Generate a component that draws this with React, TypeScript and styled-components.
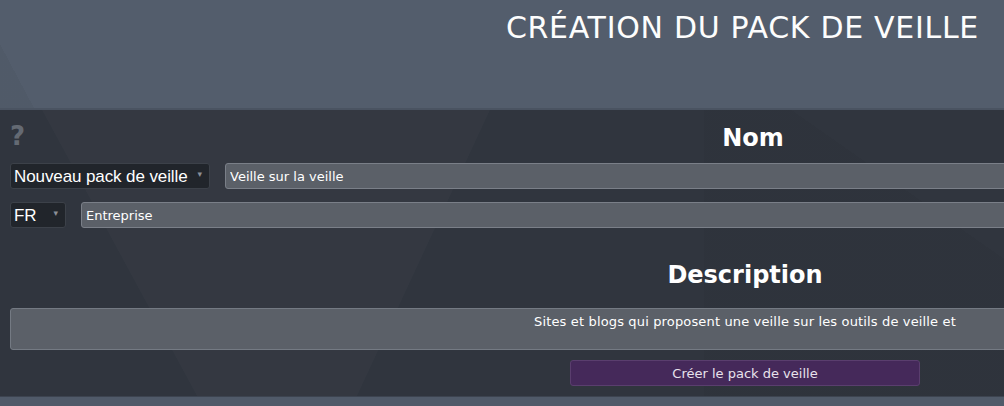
import styled, { createGlobalStyle } from "styled-components";

const GlobalStyle = createGlobalStyle`
  html, body {
    margin: 0;
    padding: 0;
    background: #31363f;
    overflow: hidden;
  }

  * {
    box-sizing: border-box;
  }
`;

const Page = styled.div`
  width: 1004px;
  height: 406px;
  overflow: hidden;
  display: flex;
  flex-direction: column;
  font-family: "DejaVu Sans", Verdana, sans-serif;
  color: #fff;
`;

const Header = styled.header`
  height: 110px;
  flex-shrink: 0;
  padding: 10px 25px 0 0;
  text-align: right;
  background:
    linear-gradient(62deg, rgba(0, 0, 0, 0.035) 0 3.2%, transparent 3.2%),
    #535d6c;
  border-bottom: 2px solid #4a5361;
`;

const Title = styled.h1`
  margin: 0;
  font-size: 30px;
  line-height: 36px;
  font-weight: 400;
  letter-spacing: 0.7px;
  color: #fdfdfd;
`;

// low-poly lighter band behind the form
const Main = styled.main`
  position: relative;
  flex-shrink: 0;
  height: 287px;
  padding: 14px 0 10px 10px;
  background:
    linear-gradient(215deg, rgba(0, 0, 0, 0) 0 30%, rgba(0, 0, 0, 0.03) 30% 100%) right / 300px 100% no-repeat,
    #30353e;
  border-bottom: 1px solid #3d4450;

  &::before {
    content: "";
    position: absolute;
    inset: 0;
    background: rgba(255, 255, 255, 0.018);
    clip-path: polygon(42px 0, 490px 0, 357px 100%, 197px 100%);
    pointer-events: none;
  }
`;

const Form = styled.form`
  position: relative;
  width: 1470px;
  display: flex;
  flex-direction: column;
`;

const TopRow = styled.div`
  display: flex;
  align-items: flex-start;
`;

const Help = styled.span`
  width: 16px;
  margin-top: -3px;
  font-size: 26px;
  line-height: 30px;
  font-weight: 700;
  color: #646a73;
  cursor: help;
`;

const SectionTitle = styled.h2<{ $top?: number }>`
  flex: 1;
  margin: ${(p) => p.$top ?? 0}px 0 0;
  font-size: 24px;
  line-height: 29px;
  font-weight: 700;
  text-align: center;
  color: #fff;
`;

const FieldRow = styled.div<{ $top: number }>`
  display: flex;
  gap: 15px;
  margin-top: ${(p) => p.$top}px;
`;

const SelectWrap = styled.div<{ $width: number }>`
  position: relative;
  width: ${(p) => p.$width}px;
  height: 26px;
  flex-shrink: 0;

  &::after {
    content: "▾";
    position: absolute;
    right: 8px;
    top: 6px;
    font-size: 9px;
    color: #8c9098;
    pointer-events: none;
  }
`;

const Select = styled.select`
  appearance: none;
  width: 100%;
  height: 100%;
  padding: 0 0 0 3px;
  background: #21252b;
  border: 1px solid #3c4149;
  border-radius: 3px;
  color: #fff;
  font-family: "Liberation Sans", Arial, sans-serif;
  font-size: 17px;
  letter-spacing: -0.1px;
  outline: none;
`;

const TextInput = styled.input`
  flex: 1;
  height: 26px;
  padding: 0 4px;
  background: #5b6068;
  border: 1px solid #7a7f88;
  border-radius: 3px;
  color: #fff;
  font-family: "DejaVu Sans", Verdana, sans-serif;
  font-size: 13px;
  outline: none;
`;

const TextArea = styled.textarea`
  margin-top: 18px;
  height: 42px;
  padding: 5px 4px;
  resize: none;
  background: #5b6068;
  border: 1px solid #747a83;
  border-radius: 3px;
  color: #fff;
  font-family: "DejaVu Sans", Verdana, sans-serif;
  font-size: 13px;
  line-height: 16px;
  letter-spacing: 0.15px;
  text-align: center;
  outline: none;
`;

const SubmitButton = styled.button`
  align-self: center;
  margin-top: 10px;
  width: 350px;
  height: 26px;
  background: #45295a;
  border: 1px solid #5a3e6e;
  border-radius: 3px;
  color: #e8e2ec;
  font-family: "DejaVu Sans", Verdana, sans-serif;
  font-size: 13px;
  cursor: pointer;
`;

const Footer = styled.footer`
  flex: 1;
  background: #505a69;
`;

const App = () => {
  return (
    <>
      <GlobalStyle />
      <Page>
        <Header>
          <Title>CRÉATION DU PACK DE VEILLE</Title>
        </Header>
        <Main>
          <Form onSubmit={(e) => e.preventDefault()}>
            <TopRow>
              <Help>?</Help>
              <SectionTitle>Nom</SectionTitle>
            </TopRow>

            <FieldRow $top={10}>
              <SelectWrap $width={200}>
                <Select defaultValue="new">
                  <option value="new">Nouveau pack de veille</option>
                </Select>
              </SelectWrap>
              <TextInput defaultValue="Veille sur la veille" />
            </FieldRow>

            <FieldRow $top={13}>
              <SelectWrap $width={56}>
                <Select defaultValue="fr">
                  <option value="fr">FR</option>
                  <option value="en">EN</option>
                </Select>
              </SelectWrap>
              <TextInput defaultValue="Entreprise" />
            </FieldRow>

            <SectionTitle $top={33}>Description</SectionTitle>
            <TextArea defaultValue="Sites et blogs qui proposent une veille sur les outils de veille et" />

            <SubmitButton type="submit">Créer le pack de veille</SubmitButton>
          </Form>
        </Main>
        <Footer />
      </Page>
    </>
  );
};

export default App;
